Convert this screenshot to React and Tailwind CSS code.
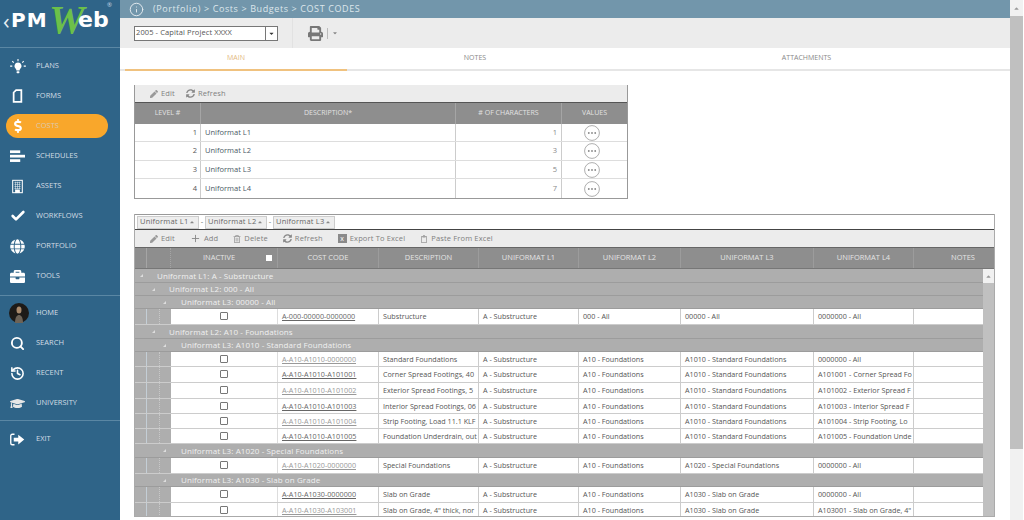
import { Plus, Info, Check, Search, History } from 'lucide-react';
import { FaPen, FaSyncAlt, FaRegTrashAlt, FaRegClipboard, FaPrint, FaDollarSign, FaGlobe, FaBriefcase, FaGraduationCap, FaCaretDown, FaCaretUp } from 'react-icons/fa';

const font = { fontFamily: '"Open Sans", "Liberation Sans", sans-serif' };

const Bulb = () => (
  <svg width="16" height="15" viewBox="0 0 22 21" fill="white">
    <path d="M11 5a5 5 0 0 0-3 9c.6.5.8 1.200.8 2h4.400c0-.8.2-1.500.8-2a5 5 0 0 0-3-9z" />
    <rect x="9" y="17" width="4" height="3" rx="1" />
    <path d="M11 0v3M3 3l2 2M19 3l-2 2M0 10h3M19 10h3" stroke="white" strokeWidth="1.500" />
  </svg>
);
const FormIcon = () => (
  <svg width="11" height="14" viewBox="0 0 14 20" fill="none" stroke="white" strokeWidth="2.500">
    <path d="M5 1.500h7.500v17h-11V5z" />
  </svg>
);
const ScheduleIcon = () => (
  <svg width="15" height="13" viewBox="0 0 22 18" fill="white">
    <rect x="0" y="0" width="15" height="4" />
    <rect x="0" y="6.500" width="22" height="4" />
    <rect x="0" y="13" width="15" height="4" />
  </svg>
);
const AssetIcon = () => (
  <svg width="11" height="15" viewBox="0 0 16 20" fill="none" stroke="white">
    <rect x="1" y="1" width="14" height="18" strokeWidth="1.500" />
    <path d="M3.500 4h9M3.500 7h9M3.500 10h9M3.500 13h9M5 3v11M8 3v11M11 3v11" strokeWidth="1" strokeOpacity=".7" />
    <rect x="5" y="15" width="6" height="4" fill="white" />
  </svg>
);
const ExitIcon = () => (
  <svg width="15" height="13" viewBox="0 0 20 17" fill="white">
    <path d="M6 1.500H3a2 2 0 0 0-2 2v10a2 2 0 0 0 2 2h3" fill="none" stroke="white" strokeWidth="1.800" />
    <path d="M5 6h6V2l8 6.500-8 6.500v-4H5z" />
  </svg>
);
const Avatar = () => (
  <svg width="20" height="20" viewBox="0 0 20 20" className="shrink-0 ml-[3px]">
    <circle cx="10" cy="10" r="10" fill="#1d1a17" />
    <ellipse cx="10" cy="7" rx="2.500" ry="3.500" fill="#a98a6c" />
    <path d="M6 20c0-6 2-8 4-8s4 2 4 8z" fill="#6d6357" />
  </svg>
);
const Dots = () => (
  <svg width="16" height="16" viewBox="0 0 16 16">
    <circle cx="8" cy="8" r="7.400" fill="white" stroke="#999" strokeWidth=".8" />
    <circle cx="4.800" cy="8" r=".9" fill="#888" />
    <circle cx="8" cy="8" r=".9" fill="#888" />
    <circle cx="11.200" cy="8" r=".9" fill="#888" />
  </svg>
);

const navTop = [
  { label: 'PLANS', icon: <Bulb /> },
  { label: 'FORMS', icon: <FormIcon /> },
  { label: 'COSTS', icon: <FaDollarSign size={14} color="white" />, active: true },
  { label: 'SCHEDULES', icon: <ScheduleIcon /> },
  { label: 'ASSETS', icon: <AssetIcon /> },
  { label: 'WORKFLOWS', icon: <Check size={16} color="white" strokeWidth={4} /> },
  { label: 'PORTFOLIO', icon: <FaGlobe size={15} color="white" /> },
  { label: 'TOOLS', icon: <FaBriefcase size={15} color="white" /> },
];
const navBottom = [
  { label: 'HOME', icon: <Avatar /> },
  { label: 'SEARCH', icon: <Search size={15} color="white" strokeWidth={3} /> },
  { label: 'RECENT', icon: <History size={15} color="white" strokeWidth={2.500} /> },
  { label: 'UNIVERSITY', icon: <FaGraduationCap size={15} color="#e6e6e6" /> },
];

function NavItem({ item }) {
  return (
    <div className={item.active
      ? 'flex items-center h-[24px] my-[3px] ml-[6px] mr-[12px] pl-[3px] rounded-full bg-[#f9a72b]'
      : 'flex items-center h-[30px] ml-[6px] pl-[3px]'}>
      <span className="w-[17px] mr-[10px] flex justify-center shrink-0">{item.icon}</span>
      <span className={item.active ? 'text-[7.500px] font-medium text-[#d9c9ab]' : 'text-[7.500px] font-medium text-[#d3dde4]'}>{item.label}</span>
    </div>
  );
}

function Sidebar() {
  return (
    <div className="w-[120px] shrink-0 h-full bg-[#2f6488] flex flex-col">
      <div className="relative h-[48px] shrink-0 border-b border-[#5a87a4]">
        <span className="absolute left-[3px] top-[6px] text-[22px] leading-[28px] text-[#e8eef2]">‹</span>
        <span className="absolute left-[11px] top-[10px] text-[20px] leading-[20px] font-bold tracking-[1px] text-white" style={{ fontFamily: '"DejaVu Sans", sans-serif' }}>PM</span>
        <span className="absolute left-[49px] top-[-2px] text-[40px] leading-[44px] font-bold italic text-[#6cc04a]" style={{ fontFamily: '"Liberation Serif", serif' }}>W</span>
        <span className="absolute left-[78px] top-[9px] text-[22px] leading-[22px] font-bold text-white" style={{ fontFamily: '"DejaVu Sans", sans-serif' }}>eb</span>
        <span className="absolute left-[107px] top-[1px] text-[6px] text-[#c9d8e2]">®</span>
      </div>
      <div className="pt-[3px] pb-[4px] border-b border-[#5a87a4]">
        {navTop.map((item) => <NavItem key={item.label} item={item} />)}
      </div>
      <div className="pt-[2px] pb-[2px] border-b border-[#5a87a4]">
        {navBottom.map((item) => <NavItem key={item.label} item={item} />)}
      </div>
      <div className="pt-[3px]">
        <NavItem item={{ label: 'EXIT', icon: <ExitIcon /> }} />
      </div>
    </div>
  );
}

function ToolBtn({ icon, label }) {
  return (
    <span className="flex items-center gap-[3px] text-[7.500px] tracking-[0.150px] text-[#808080]">
      {icon}
      {label}
    </span>
  );
}

const topRows = [
  { level: 1, name: 'Uniformat L1', chars: 1, h: 'h-[18px]' },
  { level: 2, name: 'Uniformat L2', chars: 3, h: 'h-[19px]' },
  { level: 3, name: 'Uniformat L3', chars: 5, h: 'h-[18px]' },
  { level: 4, name: 'Uniformat L4', chars: 7, h: 'h-[19px]' },
];

function LevelsTable() {
  return (
    <div className="w-[494px] border-x border-b border-[#999]">
      <div className="h-[18px] bg-[#ececec] border-b border-[#555] flex items-center gap-[11px] pl-[15px]">
        <ToolBtn icon={<FaPen size={8} color="#999" />} label="Edit" />
        <ToolBtn icon={<FaSyncAlt size={9} color="#888" />} label="Refresh" />
      </div>
      <div className="h-[21px] bg-[#8e8e8e] grid grid-cols-[66px_255px_106px_1fr] text-[7px] font-medium text-[#e2e2e2] text-center">
        <div className="flex items-center justify-center border-r border-[#a5a5a5]">LEVEL #</div>
        <div className="flex items-center justify-center border-r border-[#a5a5a5]">DESCRIPTION*</div>
        <div className="flex items-center justify-center border-r border-[#a5a5a5]">
          # OF CHARACTERS
        </div>
        <div className="flex items-center justify-center">VALUES</div>
      </div>
      {topRows.map((r) => (
        <div key={r.level} className={`${r.h} grid grid-cols-[66px_255px_106px_1fr] text-[7.500px] text-[#555] border-b border-[#ddd] last:border-b-0`}>
          <div className="flex items-center justify-end pr-[3px] border-r border-[#ccc]">{r.level}</div>
          <div className="flex items-center pl-[4px] border-r border-[#ccc] text-[#4a5a66]">{r.name}</div>
          <div className="flex items-center justify-end pr-[4px] border-r border-[#ccc] text-[#888]">{r.chars}</div>
          <div className="flex items-center justify-center pr-[5px]">
            <Dots />
          </div>
        </div>
      ))}
    </div>
  );
}

const dataCols = 'grid grid-cols-[12px_12px_12px_107px_101px_100px_100px_102px_133px_100px_1fr]';

const sub = 'A - Substructure';
const fnd = 'A10 - Foundations';
const std = 'A1010 - Standard Foundations';

const gridRows = [
  { group: 'Uniformat L1: A - Substructure', depth: 0, h: 'h-[14px]' },
  { group: 'Uniformat L2: 000 - All', depth: 1, h: 'h-[13px]' },
  { group: 'Uniformat L3: 00000 - All', depth: 2, h: 'h-[13px]' },
  { cells: ['A-000-00000-0000000', 'Substructure', sub, '000 - All', '00000 - All', '0000000 - All'], h: 'h-[16px]' },
  { group: 'Uniformat L2: A10 - Foundations', depth: 1, h: 'h-[14px]' },
  { group: 'Uniformat L3: A1010 - Standard Foundations', depth: 2, h: 'h-[13px]' },
  { cells: ['A-A10-A1010-0000000', 'Standard Foundations', sub, fnd, std, '0000000 - All'], h: 'h-[15px]', faint: true },
  { cells: ['A-A10-A1010-A101001', 'Corner Spread Footings, 40', sub, fnd, std, 'A101001 - Corner Spread Fo'], h: 'h-[16px]' },
  { cells: ['A-A10-A1010-A101002', 'Exterior Spread Footings, 5', sub, fnd, std, 'A101002 - Exterior Spread F'], h: 'h-[16px]', faint: true },
  { cells: ['A-A10-A1010-A101003', 'Interior Spread Footings, 06', sub, fnd, std, 'A101003 - Interior Spread F'], h: 'h-[15px]' },
  { cells: ['A-A10-A1010-A101004', 'Strip Footing, Load 11.1 KLF', sub, fnd, std, 'A101004 - Strip Footing, Lo'], h: 'h-[15px]', faint: true },
  { cells: ['A-A10-A1010-A101005', 'Foundation Underdrain, out', sub, fnd, std, 'A101005 - Foundation Unde'], h: 'h-[15px]' },
  { group: 'Uniformat L3: A1020 - Special Foundations', depth: 2, h: 'h-[14px]' },
  { cells: ['A-A10-A1020-0000000', 'Special Foundations', sub, fnd, 'A1020 - Special Foundations', '0000000 - All'], h: 'h-[16px]', faint: true },
  { group: 'Uniformat L3: A1030 - Slab on Grade', depth: 2, h: 'h-[13px]' },
  { cells: ['A-A10-A1030-0000000', 'Slab on Grade', sub, fnd, 'A1030 - Slab on Grade', '0000000 - All'], h: 'h-[16px]' },
  { cells: ['A-A10-A1030-A103001', 'Slab on Grade, 4" thick, nor', sub, fnd, 'A1030 - Slab on Grade', 'A103001 - Slab on Grade, 4"'], h: 'h-[15px]', faint: true },
];

const groupPad = ['pl-[5px] gap-[14px]', 'pl-[17px] gap-[14px]', 'pl-[28px] gap-[15px]'];

function GroupRow({ row }) {
  return (
    <div className={`${row.h} bg-[#aeaeae] border-b border-[#9c9c9c] flex items-center ${groupPad[row.depth]} text-[8px] font-medium leading-[10px] tracking-[0.100px] text-[#f0f0f0]`}>
      <span className="w-0 h-0 border-l-[3px] border-l-transparent border-b-[3px] border-b-[#ddd]"></span>
      <span className="whitespace-nowrap">{row.group}</span>
    </div>
  );
}

function DataRow({ row }) {
  const [code, desc, l1, l2, l3, l4] = row.cells;
  const cell = 'flex items-center pl-[4px] border-r border-[#ccc] overflow-hidden whitespace-nowrap';
  return (
    <div className={`${row.h} ${dataCols} border-b border-[#ccc] text-[7.200px] text-[#555]`}>
      <div className="bg-[#aeaeae] border-r border-[#c4ced6]"></div>
      <div className="bg-[#aeaeae]"></div>
      <div className="bg-[#aeaeae] border-l border-dotted border-[#c8c8c8]"></div>
      <div className="flex items-center justify-center border-r border-[#ddd] pb-[1px]">
        <span className="w-[8px] h-[8px] rounded-[1px] border border-[#777] bg-white"></span>
      </div>
      <div className={cell}><span className={row.faint ? 'underline text-[#999]' : 'underline text-[#666]'}>{code}</span></div>
      <div className={cell}>{desc}</div>
      <div className={cell}>{l1}</div>
      <div className={cell}>{l2}</div>
      <div className={cell}>{l3}</div>
      <div className={cell}>{l4}</div>
      <div></div>
    </div>
  );
}

function CodesGrid() {
  const heads = ['COST CODE', 'DESCRIPTION', 'UNIFORMAT L1', 'UNIFORMAT L2', 'UNIFORMAT L3', 'UNIFORMAT L4'];
  return (
    <div className="w-[861px] h-[303px] border-x border-b border-[#aaa] flex flex-col overflow-hidden">
      <div className="h-[16px] shrink-0 border-t border-b border-t-[#999] border-b-[#444] bg-white flex items-center pl-[2px] text-[7.500px] tracking-[0.200px] text-[#666]">
        {['Uniformat L1', 'Uniformat L2', 'Uniformat L3'].map((g, i) => (
          <span key={g} className="flex items-center">
            {i > 0 && <span className="w-[6px] text-center">-</span>}
            <span className="h-[13px] w-[62px] flex items-center justify-between pl-[2px] pr-[3px] bg-[#eee] border border-[#ccc]">
              {g}
              <FaCaretUp size={6} color="#888" />
            </span>
          </span>
        ))}
      </div>
      <div className="h-[18px] shrink-0 bg-[#ececec] border-b border-[#666] flex items-center gap-[15px] pl-[15px]">
        <ToolBtn icon={<FaPen size={8} color="#999" />} label="Edit" />
        <ToolBtn icon={<Plus size={11} color="#888" />} label="Add" />
        <ToolBtn icon={<FaRegTrashAlt size={8} color="#999" />} label="Delete" />
        <ToolBtn icon={<FaSyncAlt size={9} color="#888" />} label="Refresh" />
        <ToolBtn
          icon={<span className="w-[9px] h-[9px] bg-[#8a8a8a] text-white text-[7px] leading-[9px] text-center">x</span>}
          label="Export To Excel"
        />
        <ToolBtn icon={<FaRegClipboard size={8} color="#999" />} label="Paste From Excel" />
      </div>
      <div className={`${dataCols} h-[21px] shrink-0 bg-[#8e8e8e] border-b border-[#777] text-[7.500px] text-[#e4e4e4]`}>
        <div className="border-r border-[#a5a5a5]"></div>
        <div></div>
        <div className="border-r border-dotted border-[#a5a5a5]"></div>
        <div className="flex items-center justify-between pl-[32px] pr-[5px] border-r border-[#9c9c9c]">
          INACTIVE
          <span className="w-[6px] h-[6px] bg-white"></span>
        </div>
        {heads.map((h) => (
          <div key={h} className="flex items-center justify-center border-r border-[#9c9c9c]">{h}</div>
        ))}
        <div className="flex items-center justify-end pr-[19px]">NOTES</div>
      </div>
      <div className="flex-1 flex min-h-0">
        <div className="w-[848px] shrink-0">
          {gridRows.map((row, i) => (row.group
            ? <GroupRow key={i} row={row} />
            : <DataRow key={i} row={row} />))}
        </div>
        <div className="flex-1 bg-[#c0c0c0] flex flex-col">
          <div className="h-[14px] shrink-0 bg-[#f1f1f1] flex items-center justify-center">
            <FaCaretUp size={7} color="#999" />
          </div>
        </div>
      </div>
    </div>
  );
}

export default function App() {
  return (
    <div className="w-[1024px] h-[520px] overflow-hidden flex bg-white" style={font}>
      <Sidebar />
      <div className="w-[890px] shrink-0 flex flex-col h-full">
        <div className="h-[18px] shrink-0 bg-[#7296ab] flex items-center pl-[9px] gap-[9px] text-[9px] tracking-[0.600px] text-[#dde6eb]">
          <Info size={15} color="#e6edf1" strokeWidth={1.500} />
          <span>(Portfolio) &gt; Costs &gt; Budgets &gt; COST CODES</span>
        </div>
        <div className="h-[30px] shrink-0 bg-[#ececec] flex items-center pl-[14px]">
          <div className="w-[144px] h-[15px] bg-white border border-[#777] flex items-center text-[7.500px] tracking-[0.100px] text-[#555]">
            <span className="flex-1 pl-[1px]">2005 - Capital Project XXXX</span>
            <span className="w-[12px] h-full border-l border-[#777] flex items-center justify-center">
              <FaCaretDown size={7} color="#333" />
            </span>
          </div>
          <div className="w-px h-full bg-[#e2e2e2] ml-[14px]"></div>
          <FaPrint size={15} color="#777" className="ml-[15px]" />
          <span className="w-px h-[11px] bg-[#bbb] ml-[4px]"></span>
          <FaCaretDown size={6} color="#888" className="ml-[4px]" />
        </div>
        <div className="h-[23px] shrink-0 flex pl-[5px] border-b-2 border-[#e6e6e6] text-[7px] text-[#888]">
          <div className="w-[222px] h-[23px] flex items-center justify-center border-b-2 border-[#f0c27f] text-[#e3b97f]">MAIN</div>
          <div className="w-[256px] flex items-center justify-center">NOTES</div>
          <div className="w-[407px] flex items-center justify-center">ATTACHMENTS</div>
        </div>
        <div className="pl-[14px] pt-[14px]">
          <LevelsTable />
          <div className="mt-[15px]">
            <CodesGrid />
          </div>
        </div>
      </div>
      <div className="w-[13px] h-full mr-[1px] bg-[#f1f1f1] flex flex-col">
        <div className="h-[16px] shrink-0 flex items-center justify-center">
          <FaCaretUp size={7} color="#999" />
        </div>
        <div className="h-[433px] shrink-0 bg-[#c0c0c0]"></div>
      </div>
    </div>
  );
}
